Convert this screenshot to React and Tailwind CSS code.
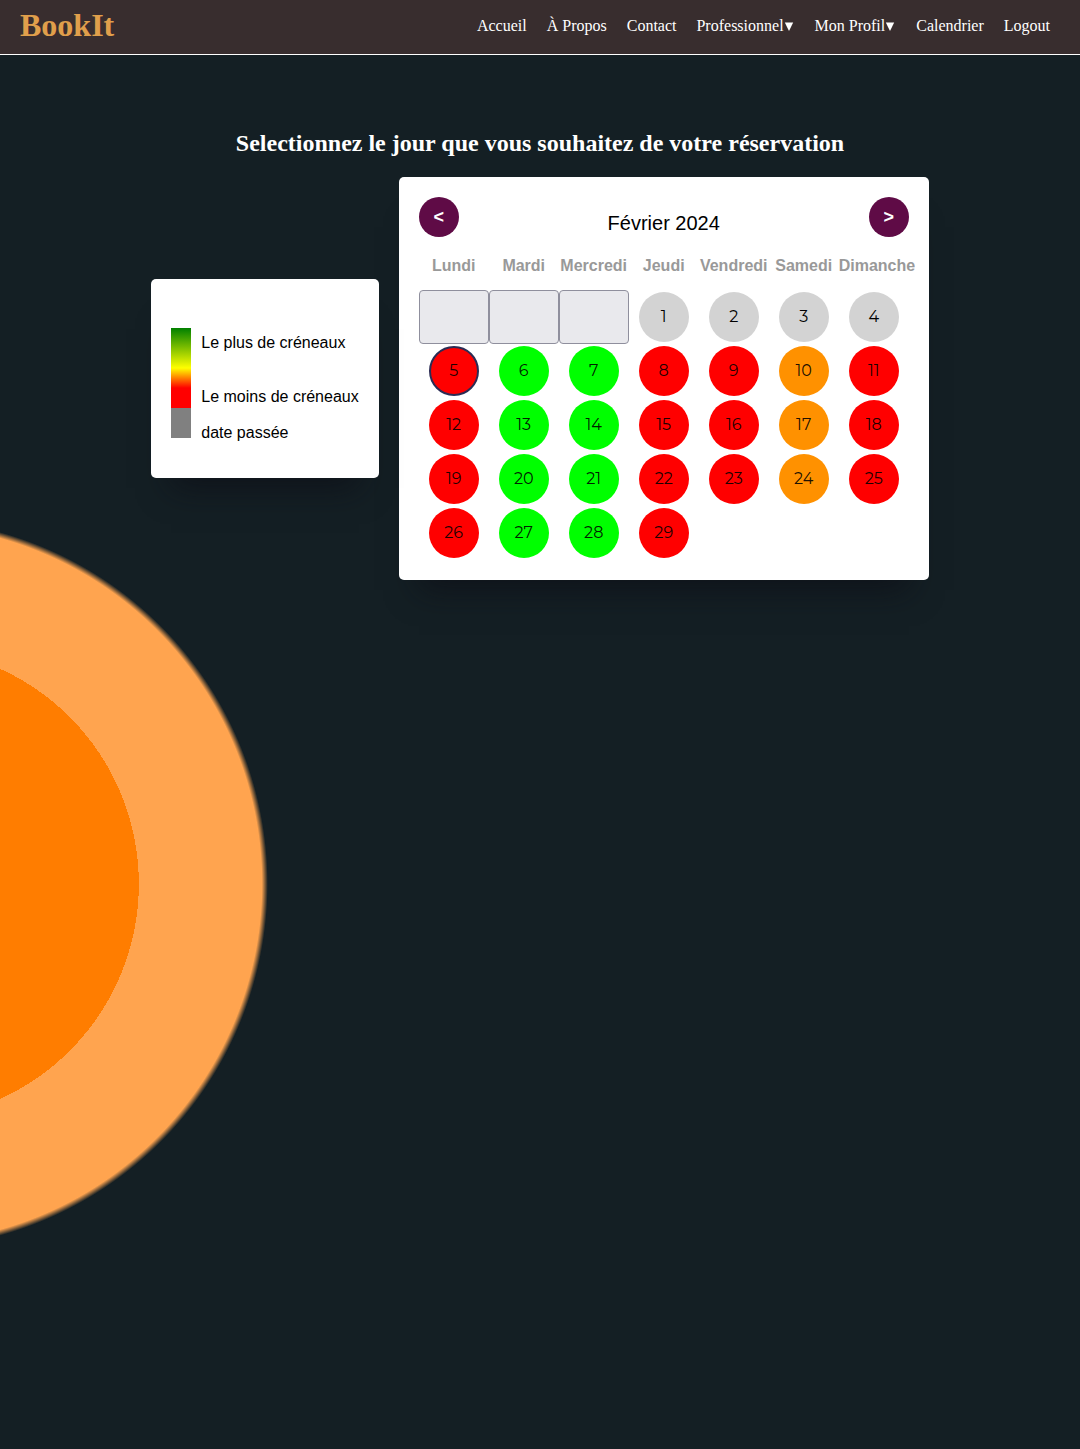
import React from "react";

const links = ["Accueil", "À Propos", "Contact", "Professionnel▾", "Mon Profil▾", "Calendrier", "Logout"];
const weekdays = ["Lundi", "Mardi", "Mercredi", "Jeudi", "Vendredi", "Samedi", "Dimanche"];
const weeks = [
  [null, null, null, 1, 2, 3, 4],
  [5, 6, 7, 8, 9, 10, 11],
  [12, 13, 14, 15, 16, 17, 18],
  [19, 20, 21, 22, 23, 24, 25],
  [26, 27, 28, 29],
];
const today = 5;

function dayColor(day, column) {
  if (day < today) return "bg-[#d3d3d3]";
  if (column === 1 || column === 2) return "bg-[#00ff00]";
  if (column === 5) return "bg-[#ff9100]";
  return "bg-[#ff0000]";
}

function NavLink({ label }) {
  const hasMenu = label.endsWith("▾");
  return (
    <a href="#" className="flex items-center whitespace-nowrap">
      {hasMenu ? label.slice(0, -1) : label}
      {hasMenu && (
        <svg viewBox="0 0 11 12" className="h-3 w-[11px] fill-white" aria-hidden="true">
          <path d="M.8 2.5h8.4L5 11z" />
        </svg>
      )}
    </a>
  );
}

function Header() {
  return (
    <header className="flex h-[55px] items-start justify-between border-b border-white bg-[#382d2e] pr-[30px] pl-5 font-['Liberation_Serif',serif]">
      <a href="#" className="pt-[5px] text-[32px] leading-10 font-bold text-[#e09f4b]">BookIt</a>
      <nav className="flex gap-5 pt-3.5 text-base leading-6 text-white">
        {links.map((label) => <NavLink key={label} label={label} />)}
      </nav>
    </header>
  );
}

const cardShadow = "shadow-[0_30px_30px_-20px_rgba(12,12,20,0.6)]";

function Legend() {
  return (
    <section className={`relative z-10 flex gap-2.5 rounded-[5px] bg-white px-5 pt-[49px] pb-[33px] text-base leading-6 text-black ${cardShadow}`}>
      <div aria-hidden="true">
        <div className="h-20 w-5 bg-[linear-gradient(#008000,#ffff00_50%,#ff0000_75%)]" />
        <div className="h-[30px] w-5 bg-[#808080]" />
      </div>
      <div className="pt-[3px]">
        <p>Le plus de créneaux</p>
        <p className="mt-[30px]">Le moins de créneaux</p>
        <p className="mt-3">date passée</p>
      </div>
    </section>
  );
}

function ArrowButton({ label, children }) {
  return (
    <button type="button" aria-label={label} className="size-10 rounded-full bg-[#5f0b46] text-lg font-bold text-white">
      {children}
    </button>
  );
}

function Calendar() {
  return (
    <section className={`rounded-[5px] bg-white p-5 text-black ${cardShadow}`}>
      <div className="flex h-10 items-start justify-between">
        <ArrowButton label="Mois précédent">&lt;</ArrowButton>
        <h2 className="pt-3 text-xl leading-7">Février 2024</h2>
        <ArrowButton label="Mois suivant">&gt;</ArrowButton>
      </div>
      <table className="mt-3 w-[490px] table-fixed">
        <thead>
          <tr>
            {weekdays.map((name) => (
              <th key={name} className="h-[41px] p-0 pt-[5px] text-center align-top text-base leading-6 font-bold text-[#999999]">{name}</th>
            ))}
          </tr>
        </thead>
        <tbody>
          {weeks.map((week, row) => (
            <tr key={row}>
              {week.map((day, column) => (
                <td key={column} className="h-[54px] p-0 text-center align-middle">
                  {day === null ? (
                    <button type="button" disabled aria-label="Vide" className="block h-[54px] w-full rounded-[4px] border border-[#8f8f9d] bg-[#e9e9ed]" />
                  ) : (
                    <button
                      type="button"
                      className={`mx-auto block size-[50px] rounded-full font-['Montserrat','Inter',sans-serif] text-base ${day < today ? "text-black" : "text-black/90"} ${dayColor(day, column)} ${day === today ? "border-2 border-[#2c2c54]" : ""}`}
                    >
                      {day}
                    </button>
                  )}
                </td>
              ))}
            </tr>
          ))}
        </tbody>
      </table>
    </section>
  );
}

export default function App() {
  return (
    <div className="min-h-screen bg-[#141f24] bg-[radial-gradient(circle_at_-9%_61%,#ff7d00_236px,#ffa44f_236px,#ffa44f_359px,#141f24_365px)] font-['Liberation_Sans',sans-serif]">
      <Header />
      <main className="flex flex-col items-center pt-[72px]">
        <h1 className="text-center font-['Liberation_Serif',serif] text-2xl leading-8 font-bold text-white">
          Selectionnez le jour que vous souhaitez de votre réservation
        </h1>
        <div className="mt-[18px] flex flex-wrap items-center justify-center gap-5">
          <Legend />
          <Calendar />
        </div>
      </main>
    </div>
  );
}
